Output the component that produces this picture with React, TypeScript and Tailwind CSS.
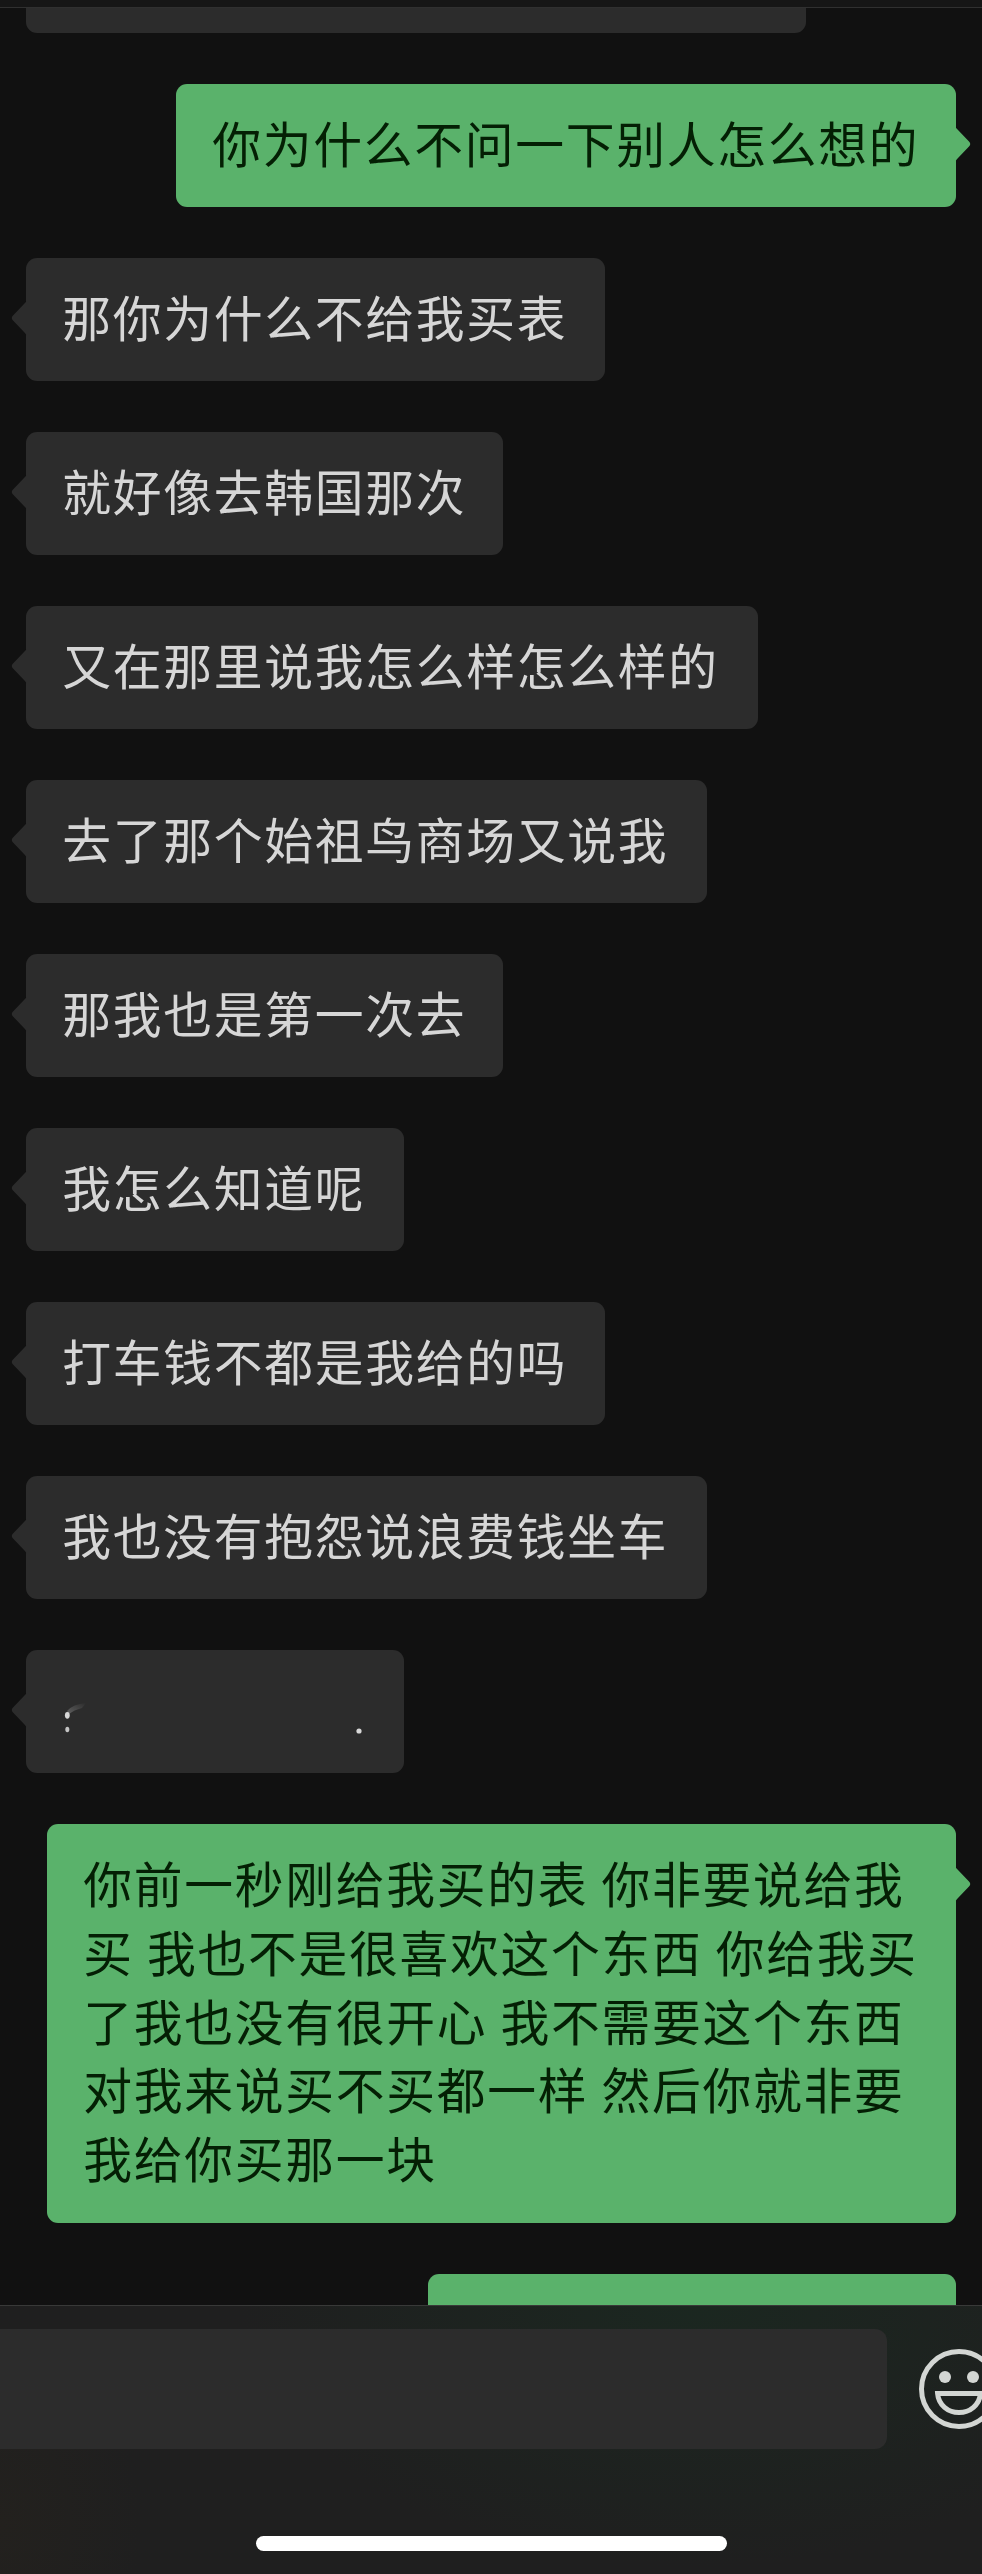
import React from 'react';

type Message = {
  from: 'me' | 'friend';
  size: string;
  text?: string;
  lines?: string[];
  smudged?: boolean;
};

const MESSAGES: Message[] = [
  { from: 'me', size: 'h-[123px] w-[779.5px]', text: '你为什么不问一下别人怎么想的' },
  { from: 'friend', size: 'h-[123px] w-[579px]', text: '那你为什么不给我买表' },
  { from: 'friend', size: 'h-[123px] w-[477px]', text: '就好像去韩国那次' },
  { from: 'friend', size: 'h-[123px] w-[732px]', text: '又在那里说我怎么样怎么样的' },
  { from: 'friend', size: 'h-[123px] w-[681px]', text: '去了那个始祖鸟商场又说我' },
  { from: 'friend', size: 'h-[123px] w-[477px]', text: '那我也是第一次去' },
  { from: 'friend', size: 'h-[123px] w-[378px]', text: '我怎么知道呢' },
  { from: 'friend', size: 'h-[123px] w-[579px]', text: '打车钱不都是我给的吗' },
  { from: 'friend', size: 'h-[123px] w-[681px]', text: '我也没有抱怨说浪费钱坐车' },
  { from: 'friend', size: 'h-[123px] w-[378px]', smudged: true },
  {
    from: 'me',
    size: 'h-[399px] w-[908.5px]',
    lines: [
      '你前一秒刚给我买的表 你非要说给我',
      '买 我也不是很喜欢这个东西 你给我买',
      '了我也没有很开心 我不需要这个东西',
      '对我来说买不买都一样 然后你就非要',
      '我给你买那一块',
    ],
  },
];

const Tail: React.FC<{ mine: boolean }> = ({ mine }) => (
  <svg
    className={`absolute top-[41px] h-[38px] w-4 ${mine ? '-right-[15px] text-[#5ab26b]' : '-left-[15px] -scale-x-100 text-[#2c2c2c]'}`}
    viewBox="0 0 16 38"
    fill="currentColor"
  >
    <path d="M0 0 Q0.5 3 3 5 L14 16.5 Q16.5 19 14 21.5 L3 33 Q0.5 35 0 38 Z" />
  </svg>
);

// Wiped-out message, only a few specks of it are left
const Smudge: React.FC = () => (
  <svg className="-mt-6 -ml-[36.3px] h-[123px] w-[378px]" viewBox="0 0 378 123">
    <defs>
      <linearGradient id="streak" x1="0" y1="1" x2="1" y2="0">
        <stop offset="0" stopColor="#606060" />
        <stop offset="1" stopColor="#2c2c2c" />
      </linearGradient>
    </defs>
    <path d="M41 61 Q47 54 60 53 L56 58 Q48 60 43 64 Z" fill="url(#streak)" />
    <ellipse cx="41.3" cy="65.3" rx="2.4" ry="3.4" fill="#d8d8d8" />
    <ellipse cx="41.3" cy="79.5" rx="2" ry="2.8" fill="#c4c4c4" />
    <circle cx="333" cy="81" r="2.6" fill="#d8d8d8" />
  </svg>
);

const Bubble: React.FC<{ message: Message }> = ({ message }) => {
  const mine = message.from === 'me';

  return (
    <div className={`flex shrink-0 ${mine ? 'justify-end' : 'justify-start'}`}>
      <div
        className={`
          relative rounded-[11px] pt-6 pl-[36.3px]
          text-[48.8px] leading-[68.75px] tracking-[1.7px] whitespace-nowrap
          ${mine ? 'bg-[#5ab26b] text-[#041f04]' : 'bg-[#2c2c2c] text-[#d6d6d6]'}
          ${message.size}
        `}
      >
        <Tail mine={mine} />
        {message.smudged && <Smudge />}
        {message.text}
        {message.lines?.map((line) => (
          <div key={line} className="[word-spacing:0.6px]">{line}</div>
        ))}
      </div>
    </div>
  );
};

const App: React.FC = () => {
  return (
    <div className="flex h-[2574px] w-[982px] flex-col overflow-hidden bg-[#111111] font-['Noto_Sans_CJK_SC',sans-serif]">
      {/* Bottom edge of the title bar */}
      <div className="h-2 shrink-0 border-b border-[#303030] bg-[#161616]" />

      {/* Messages */}
      <div className="flex h-[2297px] shrink-0 flex-col gap-[51px] overflow-hidden pr-[26.5px] pl-[26px]">
        <div className="h-[25px] w-[779.5px] shrink-0 rounded-b-[11px] bg-[#2c2c2c]" />
        {MESSAGES.map((message, index) => (
          <Bubble key={index} message={message} />
        ))}
        <div className="h-[123px] w-[528px] shrink-0 self-end rounded-[11px] bg-[#5ab26b]" />
      </div>

      {/* Input bar */}
      <div className="flex h-[269px] shrink-0 flex-col border-t border-[#383938] bg-[#1f1f1f] bg-[radial-gradient(ellipse_460px_260px_at_700px_0px,#1b2720,#1f1f1f00),radial-gradient(ellipse_140px_200px_at_0px_220px,#23211e,#1f1f1f00)]">
        <div className="mt-[23px] flex items-center gap-8">
          <div className="h-[120px] w-[887px] shrink-0 rounded-r-[12px] bg-[#2c2c2c]" />
          <svg className="h-20 w-20 shrink-0" viewBox="0 0 80 80" fill="none" stroke="#d3d6d3" strokeWidth="5">
            <circle cx="40" cy="40" r="37.5" />
            <circle cx="26" cy="28" r="6" fill="#d3d6d3" stroke="none" />
            <circle cx="54" cy="28" r="6" fill="#d3d6d3" stroke="none" />
            <path d="M18.6 44.5 H61.4 C60.5 56 51 63.5 40 63.5 C29 63.5 19.5 56 18.6 44.5 Z" />
          </svg>
        </div>
        <div className="mt-[87px] ml-64 h-[15px] w-[471px] rounded-full bg-white" />
      </div>
    </div>
  );
};

export default App;
